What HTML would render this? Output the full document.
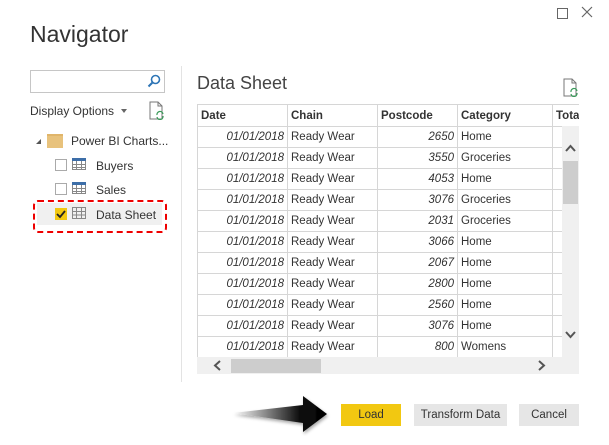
<!DOCTYPE html>
<html><head><meta charset="utf-8"><style>
body{margin:0;width:609px;height:445px;background:#fff;font-family:"Liberation Sans",sans-serif;position:relative;overflow:hidden;color:#333}
.a{position:absolute}
table{border-collapse:collapse;font-size:11.5px;table-layout:fixed}
td{border:1px solid #d6d6d6;height:19px;padding:1px 3px 0;white-space:nowrap;overflow:hidden;line-height:19px}
th{border:1px solid #d6d6d6;height:20px;padding:1px 3px 0;text-align:left;font-weight:bold;color:#333;white-space:nowrap;overflow:hidden;line-height:20px}
td.d,td.p{text-align:right;font-style:italic}
.btn{position:absolute;top:404px;height:22px;font-size:11.5px;line-height:22px;text-align:center;background:#e6e6e6;color:#333}
.tr{font-size:12px;color:#333}
</style></head><body>
<div class="a" style="left:557px;top:8px;width:9px;height:9px;border:1px solid #666"></div>
<svg class="a" style="left:581px;top:6px" width="12" height="12"><path d="M1 1L11 11M11 1L1 11" stroke="#666" stroke-width="1.2"/></svg>
<div class="a" style="left:30px;top:21px;font-size:23px;color:#333">Navigator</div>
<div class="a" style="left:30px;top:70px;width:133px;height:21px;border:1px solid #c6c6c6"></div>
<svg class="a" style="left:147px;top:74px" width="14" height="14"><circle cx="8.5" cy="5.5" r="4" fill="none" stroke="#2e75b6" stroke-width="1.6"/><path d="M5.5 8.5L1.5 12.5" stroke="#2e75b6" stroke-width="2"/></svg>
<div class="a tr" style="left:30px;top:104px">Display Options</div>
<div class="a" style="left:121px;top:109px;border-left:3px solid transparent;border-right:3px solid transparent;border-top:4px solid #666"></div>
<svg class="a" style="left:149px;top:101px" width="16" height="19"><path d="M1 1H9L13 5V18H1Z" fill="none" stroke="#777"/><path d="M9 1V5H13" fill="none" stroke="#777"/><path d="M8 14a3 3 0 0 1 6-1M14 15a3 3 0 0 1-6 1" fill="none" stroke="#3a9a5a" stroke-width="1.2"/></svg>
<div class="a" style="left:181px;top:66px;width:1px;height:316px;background:#e3e3e3"></div>
<div class="a" style="left:36px;top:139px;border-left:5px solid transparent;border-bottom:5px solid #555"></div>
<div class="a" style="left:47px;top:134px;width:16px;height:12px;background:#e8c27c;border-top:2px solid #e0b56a"></div>
<div class="a tr" style="left:71px;top:134px">Power BI Charts...</div>
<div class="a" style="left:55px;top:159px;width:10px;height:10px;border:1px solid #aaa;background:#fff"></div>
<svg class="a" style="left:72px;top:158px" width="14" height="12"><rect x="0.5" y="0.5" width="13" height="11" fill="#fff" stroke="#888"/><rect x="0" y="0" width="14" height="3" fill="#3d6ea8"/><path d="M0 6.5H14M0 9.5H14M4.5 3V12M9.5 3V12" stroke="#888"/></svg>
<div class="a tr" style="left:96px;top:159px">Buyers</div>
<div class="a" style="left:55px;top:183px;width:10px;height:10px;border:1px solid #aaa;background:#fff"></div>
<svg class="a" style="left:72px;top:182px" width="14" height="12"><rect x="0.5" y="0.5" width="13" height="11" fill="#fff" stroke="#888"/><rect x="0" y="0" width="14" height="3" fill="#3d6ea8"/><path d="M0 6.5H14M0 9.5H14M4.5 3V12M9.5 3V12" stroke="#888"/></svg>
<div class="a tr" style="left:96px;top:183px">Sales</div>
<div class="a" style="left:37px;top:203px;width:125px;height:22px;background:#f0f0f0"></div>
<div class="a" style="left:33px;top:200px;width:130px;height:29px;border:2.5px dashed #e00;border-radius:5px"></div>
<div class="a" style="left:55px;top:208px;width:12px;height:12px;background:#f2c811"></div>
<svg class="a" style="left:56px;top:209px" width="10" height="10"><path d="M1 5L4 8L9 2" fill="none" stroke="#222" stroke-width="1.8"/></svg>
<svg class="a" style="left:72px;top:207px" width="14" height="13"><rect x="0.5" y="0.5" width="13" height="11" fill="none" stroke="#888"/><path d="M0 4.5H14M0 8H14M4.5 0V12M9.5 0V12" stroke="#888"/></svg>
<div class="a tr" style="left:96px;top:208px">Data Sheet</div>
<div class="a" style="left:197px;top:73px;font-size:18px;color:#444">Data Sheet</div>
<svg class="a" style="left:563px;top:78px" width="16" height="19"><path d="M1 1H9L13 5V18H1Z" fill="none" stroke="#777"/><path d="M9 1V5H13" fill="none" stroke="#777"/><path d="M8 14a3 3 0 0 1 6-1M14 15a3 3 0 0 1-6 1" fill="none" stroke="#3a9a5a" stroke-width="1.2"/></svg>
<div class="a" style="left:197px;top:104px;width:382px;height:253px;overflow:hidden">
<table style="width:400px">
<colgroup><col style="width:90px"><col style="width:90px"><col style="width:80px"><col style="width:95px"><col style="width:45px"></colgroup>
<tr><th>Date</th><th>Chain</th><th>Postcode</th><th>Category</th><th>Total</th></tr>
<tr><td class="d">01/01/2018</td><td>Ready Wear</td><td class="p">2650</td><td>Home</td><td></td></tr>
<tr><td class="d">01/01/2018</td><td>Ready Wear</td><td class="p">3550</td><td>Groceries</td><td></td></tr>
<tr><td class="d">01/01/2018</td><td>Ready Wear</td><td class="p">4053</td><td>Home</td><td></td></tr>
<tr><td class="d">01/01/2018</td><td>Ready Wear</td><td class="p">3076</td><td>Groceries</td><td></td></tr>
<tr><td class="d">01/01/2018</td><td>Ready Wear</td><td class="p">2031</td><td>Groceries</td><td></td></tr>
<tr><td class="d">01/01/2018</td><td>Ready Wear</td><td class="p">3066</td><td>Home</td><td></td></tr>
<tr><td class="d">01/01/2018</td><td>Ready Wear</td><td class="p">2067</td><td>Home</td><td></td></tr>
<tr><td class="d">01/01/2018</td><td>Ready Wear</td><td class="p">2800</td><td>Home</td><td></td></tr>
<tr><td class="d">01/01/2018</td><td>Ready Wear</td><td class="p">2560</td><td>Home</td><td></td></tr>
<tr><td class="d">01/01/2018</td><td>Ready Wear</td><td class="p">3076</td><td>Home</td><td></td></tr>
<tr><td class="d">01/01/2018</td><td>Ready Wear</td><td class="p">800</td><td>Womens</td><td></td></tr>
</table></div>
<div class="a" style="left:562px;top:126px;width:17px;height:231px;background:#f0f0f0"></div>
<div class="a" style="left:563px;top:161px;width:15px;height:43px;background:#cdcdcd"></div>
<svg class="a" style="left:564px;top:143px" width="13" height="10"><path d="M2 8L6.5 3L11 8" fill="none" stroke="#555" stroke-width="2"/></svg>
<svg class="a" style="left:564px;top:330px" width="13" height="10"><path d="M2 2L6.5 7L11 2" fill="none" stroke="#555" stroke-width="2"/></svg>
<div class="a" style="left:197px;top:357px;width:382px;height:17px;background:#f0f0f0"></div>
<div class="a" style="left:231px;top:359px;width:90px;height:14px;background:#cdcdcd"></div>
<svg class="a" style="left:212px;top:359px" width="10" height="13"><path d="M8 2L3 6.5L8 11" fill="none" stroke="#555" stroke-width="2"/></svg>
<svg class="a" style="left:537px;top:359px" width="10" height="13"><path d="M2 2L7 6.5L2 11" fill="none" stroke="#555" stroke-width="2"/></svg>
<svg class="a" style="left:230px;top:392px" width="105" height="46"><defs><linearGradient id="g" x1="0" x2="1"><stop offset="0" stop-color="#fff"/><stop offset="0.7" stop-color="#111"/><stop offset="1" stop-color="#000"/></linearGradient><filter id="f"><feDropShadow dx="1" dy="2" stdDeviation="1.5" flood-opacity="0.35"/></filter></defs><path d="M3 21L73 13V4L97 22L73 40V31Z" fill="url(#g)" filter="url(#f)"/></svg>
<div class="btn" style="left:341px;width:60px;background:#f2c811">Load</div>
<div class="btn" style="left:414px;width:93px">Transform Data</div>
<div class="btn" style="left:519px;width:60px">Cancel</div>
</body></html>
